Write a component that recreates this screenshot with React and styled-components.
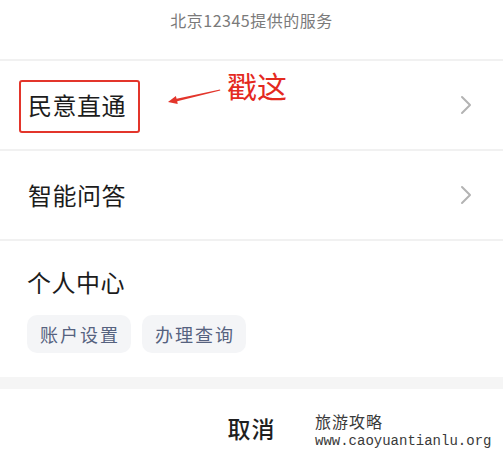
import styled, { createGlobalStyle } from "styled-components";

const GlobalStyle = createGlobalStyle`
  html, body {
    margin: 0;
    padding: 0;
    background: #ffffff;
  }
  body {
    font-family: "Noto Sans CJK SC", "Noto Sans", sans-serif;
  }
`;

const Sheet = styled.div`
  position: relative;
  width: 503px;
  height: 456px;
  overflow: hidden;
  background: #ffffff;
`;

const Header = styled.div`
  padding: 9px 0 28px;
  line-height: 22px;
  font-size: 16px;
  letter-spacing: 0.5px;
  color: #7a7a7a;
  text-align: center;
  border-bottom: 2px solid #f1f1f1;
`;

const Row = styled.div`
  position: relative;
  height: 88px;
  padding: 0 31px 0 28px;
  display: flex;
  align-items: center;
  justify-content: space-between;
  border-bottom: 2px solid #f1f1f1;
`;

const Label = styled.span`
  font-size: 24px;
  line-height: 30px;
  color: #1c1c1c;
  letter-spacing: 0.5px;
`;

const Section = styled.div`
  padding: 26px 28px 24px 27px;
  display: flex;
  flex-direction: column;
  gap: 18px;
`;

const Tags = styled.div`
  display: flex;
  gap: 11px;
`;

const Tag = styled.span`
  height: 38px;
  padding: 0 11px 0 13px;
  display: flex;
  align-items: center;
  border-radius: 10px;
  background: #f4f5f7;
  color: #56627f;
  font-size: 18px;
  letter-spacing: 2px;
`;

const Band = styled.div`
  height: 12px;
  background: #f5f5f5;
`;

const Cancel = styled.div`
  height: 78px;
  display: flex;
  align-items: center;
  justify-content: center;
  font-size: 23px;
  font-weight: 500;
  color: #1f1f1f;
  letter-spacing: 1px;
`;

const Highlight = styled.div`
  position: absolute;
  left: 19px;
  top: 19px;
  width: 121px;
  height: 53px;
  box-sizing: border-box;
  border: 2px solid #e3352b;
  border-radius: 3px;
`;

const Pointer = styled.svg`
  position: absolute;
  left: 160px;
  top: 24px;
`;

const Note = styled.span`
  position: absolute;
  left: 227px;
  top: 7px;
  font-size: 30px;
  line-height: 34px;
  color: #e42a1f;
`;

const Watermark = styled.div`
  position: absolute;
  left: 315px;
  top: 411px;
  color: #3a3a3a;
  line-height: 20px;
`;

const MarkTitle = styled.div`
  font-size: 16px;
  letter-spacing: 1px;
`;

const MarkUrl = styled.div`
  font-family: "Liberation Mono", monospace;
  font-size: 14px;
`;

const Chevron = () => (
  <svg width="12" height="20" viewBox="0 0 12 20">
    <polyline
      points="2,2 10,10 2,18"
      fill="none"
      stroke="#b3b3b3"
      strokeWidth="2"
      strokeLinecap="round"
      strokeLinejoin="round"
    />
  </svg>
);

const App = () => {
  return (
    <Sheet>
      <GlobalStyle />
      <Header>北京12345提供的服务</Header>
      <Row>
        <Label>民意直通</Label>
        <Chevron />
        <Highlight />
        <Pointer width="65" height="24" viewBox="0 0 65 24">
          <polygon
            points="8,17 15.9,11.1 16.6,13.8 60,4.6 60.3,5.4 17.2,16.3 17.7,18.9"
            fill="#e3352b"
          />
        </Pointer>
        <Note>戳这</Note>
      </Row>
      <Row>
        <Label>智能问答</Label>
        <Chevron />
      </Row>
      <Section>
        <Label>个人中心</Label>
        <Tags>
          <Tag>账户设置</Tag>
          <Tag>办理查询</Tag>
        </Tags>
      </Section>
      <Band />
      <Cancel>取消</Cancel>
      <Watermark>
        <MarkTitle>旅游攻略</MarkTitle>
        <MarkUrl>www.caoyuantianlu.org</MarkUrl>
      </Watermark>
    </Sheet>
  );
};

export default App;
